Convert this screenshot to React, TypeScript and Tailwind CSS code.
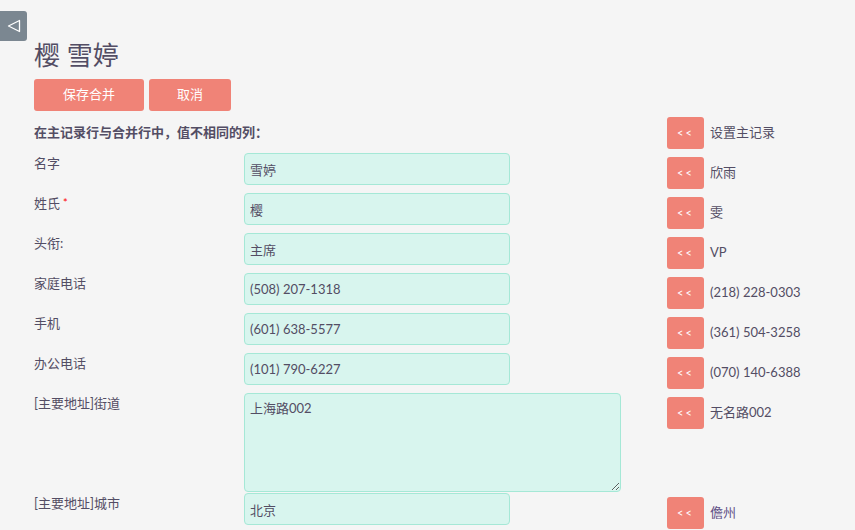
import React from 'react';

type Row = {
  label: string;
  required?: boolean;
  value: string;
  other: string;
  multiline?: boolean;
  otherClass?: string;
};

const rows: Row[] = [
  { label: '名字', value: '雪婷', other: '欣雨' },
  { label: '姓氏', required: true, value: '樱', other: '雯' },
  { label: '头衔:', value: '主席', other: 'VP' },
  { label: '家庭电话', value: '(508) 207-1318', other: '(218) 228-0303' },
  { label: '手机', value: '(601) 638-5577', other: '(361) 504-3258' },
  { label: '办公电话', value: '(101) 790-6227', other: '(070) 140-6388' },
  { label: '[主要地址]街道', value: '上海路002', other: '无名路002', multiline: true },
  { label: '[主要地址]城市', value: '北京', other: '儋州', otherClass: 'text-[#5f4f86]' },
];

function MergeButton() {
  return (
    <button className="w-[37px] h-[32px] rounded-[3px] bg-[#f08377] text-white text-[11px] tracking-[2px] flex items-center justify-center">
      &lt;&lt;
    </button>
  );
}

export default function App() {
  return (
    <div
      className="w-[855px] h-[530px] overflow-hidden bg-[#f5f5f5] text-[#534d64] relative"
      style={{ fontFamily: 'Lato, "Noto Sans CJK SC", sans-serif' }}
    >
      {/* Back tab */}
      <button className="absolute left-0 top-[11px] w-[27px] h-[30px] bg-[#7b8791] rounded-r-[3px] flex items-center justify-center">
        <svg width="14" height="14" viewBox="0 0 14 14">
          <path d="M12.5 1.5 L1.5 7 L12.5 12.5 Z" fill="none" stroke="white" strokeWidth="1.3" strokeLinejoin="round" />
        </svg>
      </button>

      <div className="pl-[34px] pt-[37px]">
        <h1 className="text-[26px] leading-[36px] font-normal">樱 雪婷</h1>

        <div className="flex gap-[5px] mt-[6px]">
          <button className="w-[110px] h-[32px] rounded-[3px] bg-[#f08377] text-white text-[13px]">保存合并</button>
          <button className="w-[82px] h-[32px] rounded-[3px] bg-[#f08377] text-white text-[13px]">取消</button>
        </div>

        <div className="mt-[2px]">
          {/* header row */}
          <div className="grid grid-cols-[210px_423px_auto] h-[40px]">
            <div className="col-span-2 pt-[4px] h-[36px] flex items-center text-[13px] font-bold whitespace-nowrap">
              在主记录行与合并行中，值不相同的列：
            </div>
            <div className="pt-[4px] flex items-center gap-[6px] h-[36px]">
              <MergeButton />
              <span className="text-[13px]">设置主记录</span>
            </div>
          </div>

          {rows.map((r) => (
            <div
              key={r.label}
              className={`grid grid-cols-[210px_423px_auto] ${r.multiline ? 'h-[100px]' : 'h-[40px]'}`}
            >
              <div className="text-[13px] leading-[20px]">
                {r.label}
                {r.required && <span className="text-[#ff0000] ml-[3px] text-[11px] align-top">*</span>}
              </div>
              <div>
                {r.multiline ? (
                  <textarea
                    defaultValue={r.value}
                    className="block w-[377px] h-[99px] rounded-[4px] border border-[#a5e8d6] bg-[#d8f5ee] px-[5px] pt-[5px] text-[13px] text-[#534d64] outline-none"
                  />
                ) : (
                  <input
                    defaultValue={r.value}
                    className="block w-[266px] h-[32px] rounded-[4px] border border-[#a5e8d6] bg-[#d8f5ee] px-[5px] text-[13px] text-[#534d64] outline-none"
                  />
                )}
              </div>
              <div className="pt-[4px]">
                <div className="flex items-center gap-[6px] h-[32px]">
                  <MergeButton />
                  <span className={`text-[13px] ${r.otherClass ?? ''}`}>{r.other}</span>
                </div>
              </div>
            </div>
          ))}
        </div>
      </div>
    </div>
  );
}
